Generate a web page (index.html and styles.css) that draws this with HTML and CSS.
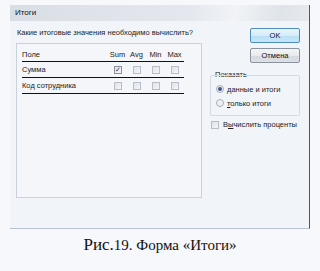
FILE: index.html
```
<!DOCTYPE html>
<html lang="ru">
<head>
  <meta charset="UTF-8">
  <title>Итоги</title>
  <link rel="stylesheet" href="styles.css">
</head>
<body>
  <div class="dialog">
    <div class="titlebar">Итоги</div>
    <div class="body">
      <div class="left">
        <div class="question">Какие итоговые значения необходимо вычислить?</div>
        <div class="listbox">
          <table class="fields">
            <thead>
              <tr>
                <th class="name">Поле</th>
                <th>Sum</th>
                <th>Avg</th>
                <th>Min</th>
                <th>Max</th>
              </tr>
            </thead>
            <tbody>
              <tr>
                <td class="name">Сумма</td>
                <td><span class="chk checked">&#10003;</span></td>
                <td><span class="chk"></span></td>
                <td><span class="chk"></span></td>
                <td><span class="chk"></span></td>
              </tr>
              <tr>
                <td class="name">Код сотрудника</td>
                <td><span class="chk"></span></td>
                <td><span class="chk"></span></td>
                <td><span class="chk"></span></td>
                <td><span class="chk"></span></td>
              </tr>
            </tbody>
          </table>
        </div>
      </div>
      <div class="right">
        <button class="btn default">OK</button>
        <button class="btn">Отмена</button>
        <div class="group">
          <div class="group-label">Показать</div>
          <div class="radio-row first"><span class="radio on"></span><span><u>д</u>анные и итоги</span></div>
          <div class="radio-row"><span class="radio"></span><span><u>т</u>олько итоги</span></div>
        </div>
        <div class="check-row"><span class="chk"></span><span>В<u>ы</u>числить проценты</span></div>
      </div>
    </div>
  </div>
  <p class="caption"><span class="big">Рис.</span>19. Форма «Итоги»</p>
</body>
</html>
```

FILE: styles.css
```
body {
  margin: 0;
  background: #f6f8fc;
  font-family: "Liberation Sans", Arial, sans-serif;
  font-size: 7.5px;
  color: #222;
}
.dialog {
  margin: 5px 10px 0 10px;
  width: 300px;
  height: 224px;
  background: #f1f4f9;
  border-right: 1px solid #555;
  border-bottom: 1px solid #b8c2d0;
  box-sizing: border-box;
}
.titlebar {
  height: 16px;
  line-height: 16px;
  padding-left: 5px;
  font-size: 8px;
  color: #111;
  background: linear-gradient(100deg, #d9dee5 0%, #e4e8ee 60%, #f1f3f6 75%, #dfe4ea 90%, #e6e9ee 100%);
}
.body {
  display: flex;
  padding: 7px 0 0 6px;
}
.left {
  width: 186px;
  flex-shrink: 0;
}
.question {
  height: 11px;
  margin-left: 1px;
}
.listbox {
  margin-top: 4px;
  height: 150px;
  border: 1px solid #c9d1dc;
  background: #f4f6fa;
  padding: 3px 17px 0 5px;
}
.fields {
  width: 100%;
  border-collapse: collapse;
}
.fields th {
  font-weight: normal;
  height: 14px;
  padding: 0;
  text-align: center;
  width: 19px;
}
.fields td {
  height: 15px;
  padding: 0;
  text-align: center;
  border-bottom: 1px solid #111;
}
.fields .name {
  text-align: left;
  width: auto;
}
.fields thead tr {
  border-bottom: 1px solid #111;
}
.chk {
  display: inline-block;
  width: 6px;
  height: 6px;
  border: 1px solid #b7bec8;
  background: linear-gradient(135deg, #dfe3e8, #f4f6f8);
  vertical-align: middle;
  font-size: 7px;
  line-height: 6px;
  color: #335;
  text-align: center;
}
.chk.checked {
  border-color: #8a93a0;
}
.right {
  margin-left: 8px;
  width: 92px;
  flex-shrink: 0;
}
.btn {
  display: block;
  width: 50px;
  height: 15px;
  margin: 0 0 5px 40px;
  padding: 0;
  font-family: inherit;
  font-size: 7.5px;
  color: #111;
  border: 1px solid #8b939e;
  border-radius: 2px;
  background: linear-gradient(#f4f5f7 0%, #e8eaed 50%, #d6d9de 51%, #dcdfe3 100%);
}
.btn.default {
  border-color: #4d8bc0;
  background: linear-gradient(#eaf5fc 0%, #d5ecf9 50%, #b9dff5 51%, #c6e6f8 100%);
}
.group {
  margin-top: 7px;
  width: 90px;
  position: relative;
}
.group-label {
  padding-left: 5px;
  height: 9px;
}
.group::after {
  content: "";
  position: absolute;
  left: 0;
  top: 5px;
  right: 0;
  bottom: -6px;
  border: 1px solid #d4dbe3;
  border-radius: 2px;
  pointer-events: none;
}
.radio-row {
  display: flex;
  align-items: center;
  gap: 3px;
  height: 14px;
  padding-left: 6px;
  white-space: nowrap;
}
.radio-row.first {
  margin-top: 3px;
}
.radio {
  width: 6px;
  height: 6px;
  border: 1px solid #a8b0bb;
  border-radius: 50%;
  background: #eef1f4;
  position: relative;
}
.radio.on::after {
  content: "";
  position: absolute;
  left: 1px;
  top: 1px;
  width: 4px;
  height: 4px;
  border-radius: 50%;
  background: #3b5a8a;
}
.check-row {
  display: flex;
  align-items: center;
  gap: 4px;
  margin-top: 10px;
  padding-left: 1px;
  white-space: nowrap;
}
.caption {
  margin: 6px 0 0 0;
  text-align: center;
  font-family: "Liberation Serif", "Times New Roman", serif;
  font-size: 15px;
  color: #111;
}
.caption .big {
  font-size: 17px;
}
```
